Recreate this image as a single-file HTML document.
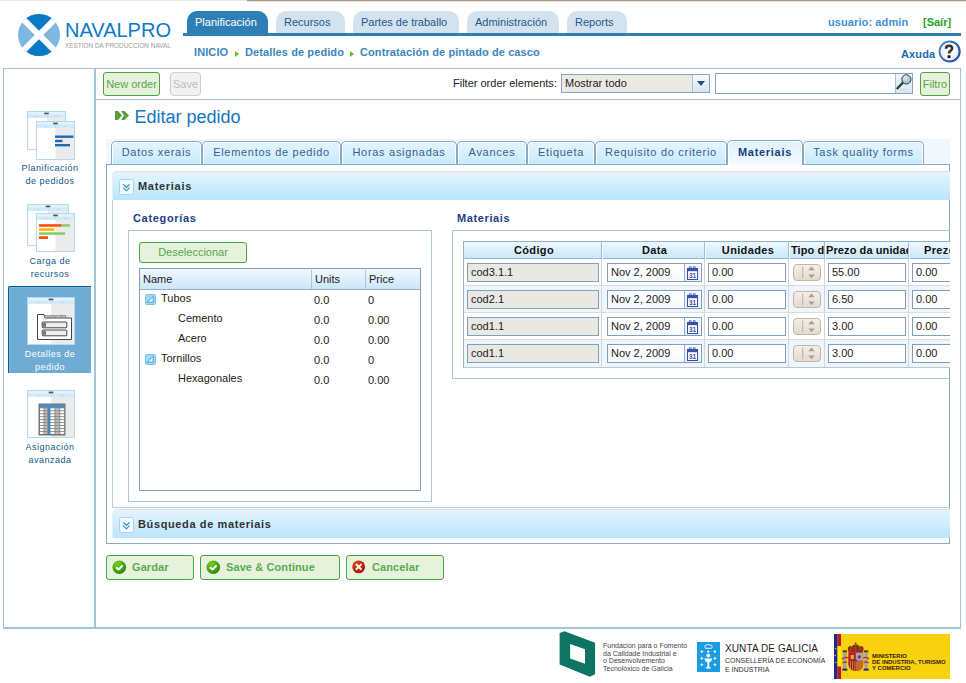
<!DOCTYPE html>
<html><head><meta charset="utf-8">
<style>
*{box-sizing:border-box;margin:0;padding:0}
html,body{width:966px;height:683px;overflow:hidden;background:#fff;font-variant-ligatures:none;font-family:"Liberation Sans",sans-serif;font-size:11px;color:#222}
.a{position:absolute}
#topline{left:247px;top:0;width:719px;height:1px;background:#a89b8a}
#topline0{left:0;top:0;width:247px;height:1px;background:#ebe7e1}
#topline2{left:247px;top:1px;width:719px;height:1px;background:#e6e0d8}
/* header tabs */
.htab{position:absolute;top:11px;height:22px;border-radius:10px 10px 0 0;background:#d3e2ef;color:#1d5a8a;font-size:11px;line-height:22px;padding-left:8px;white-space:nowrap}
.htab.sel{background:#2d7fb5;color:#fff}
#hline{left:183px;top:33px;width:778px;height:3px;background:#2d7fb5}
.crumb{position:absolute;top:45px;font-weight:bold;color:#3d85bd;font-size:11px;line-height:14px;white-space:nowrap;letter-spacing:0.1px}
.arr{position:absolute;width:0;height:0;border-left:4px solid #5cc414;border-top:3px solid transparent;border-bottom:3px solid transparent}
/* main box */
#box{left:3px;top:68px;width:958px;height:561px;border:1px solid #9ec6d9;border-bottom-width:2px}
#divider{left:94px;top:68px;width:2px;height:561px;background:#9ec6d9}
#tbline{left:96px;top:99px;width:864px;height:1px;background:#9ec6d9}
.gbtn{position:absolute;border:1px solid #4aa53e;border-radius:3px;background:#e6f2dc;color:#56a84a;font-size:11px;text-align:center;white-space:nowrap}
.side{position:absolute;left:8px;width:84px;text-align:center;color:#0f5788;font-size:9px;line-height:12.7px;letter-spacing:0.5px}

.stab{position:absolute;top:141px;height:23px;border:1px solid #88aac4;border-bottom:none;border-radius:5px 5px 0 0;background:linear-gradient(#e4f5fd,#c8ebfc);box-shadow:inset 1px 1px 0 #fff,inset -1px 0 0 #fff;color:#3a5f8e;font-size:11px;letter-spacing:0.7px;line-height:20px;text-align:center;white-space:nowrap}
.stab.sel{top:140px;height:25px;background:linear-gradient(#def2fc,#f4fbfe);font-weight:bold;color:#163e82;font-size:11px;letter-spacing:0.7px;line-height:22px}
.colicon{position:absolute;width:15px;height:16px;border:1px solid #b7cfe0;border-radius:3px;background:linear-gradient(#ffffff,#e6f1f8)}
.ticon{position:absolute;width:11px;height:11px;border:1px solid #6fb2e0;border-radius:2px;background:#a5d5f5}
.gbtn2{position:absolute;height:25px;border:1px solid #4aa53e;border-radius:3px;background:#e6f2dc;color:#5aab4e;font-weight:bold;font-size:11px;line-height:23px;padding-left:25px;white-space:nowrap;letter-spacing:0.1px}
.ok,.ko{position:absolute;left:5px;top:5px;width:14px;height:14px;border-radius:50%;background:radial-gradient(circle at 40% 30%,#8fd45a,#2f8a1c)}
.ko{background:radial-gradient(circle at 40% 30%,#f06a4a,#a51a10)}

.th{font-weight:bold;font-size:11px;line-height:13px;color:#111;white-space:nowrap;letter-spacing:0.35px}
.inp{height:19px;border:1px solid #7f9fc0;background:#fff;padding-left:3px;line-height:17px;font-size:11px;color:#222;white-space:nowrap;overflow:hidden}
.cal{width:16px;height:17px;border-left:1px solid #9fb8d0;background:#fff}
.spin{width:27px;height:17px;border:1px solid #cbc2b5;border-radius:4px;background:#e9e4dc}
</style></head><body>
<div id="topline0" class="a"></div><div id="topline" class="a"></div><div id="topline2" class="a"></div>

<!-- logo -->
<svg class="a" style="left:17px;top:13px" width="44" height="44" viewBox="0 0 44 44">
  <defs><clipPath id="cc"><circle cx="22" cy="22" r="21"/></clipPath></defs>
  <g clip-path="url(#cc)">
    <rect x="0" y="0" width="44" height="44" fill="#7db8e3"/>
    <polygon points="0,0 44,0 22,22" fill="#0a7ac7"/>
    <polygon points="0,44 44,44 22,22" fill="#0a7ac7"/>
    <line x1="0" y1="0" x2="44" y2="44" stroke="#fff" stroke-width="6"/>
    <line x1="44" y1="0" x2="0" y2="44" stroke="#fff" stroke-width="6"/>
  </g>
</svg>
<div class="a" style="left:65px;top:20px;font-size:20px;line-height:20px;color:#0a7ac7">NAVALPRO</div>
<div class="a" style="left:65px;top:42px;font-size:7px;line-height:8px;color:#9a9a9a;transform:scaleX(0.915);transform-origin:0 0;white-space:nowrap">XESTION DA PRODUCCION NAVAL</div>

<!-- header tabs -->
<div class="htab sel" style="left:187px;width:81px">Planificación</div>
<div class="htab" style="left:276px;width:69px">Recursos</div>
<div class="htab" style="left:353px;width:106px">Partes de traballo</div>
<div class="htab" style="left:467px;width:92px">Administración</div>
<div class="htab" style="left:567px;width:60px">Reports</div>
<div id="hline" class="a"></div>
<div class="a" style="left:828px;top:15px;font-weight:bold;color:#3b92d8;font-size:11px;line-height:14px;letter-spacing:0.1px">usuario: admin</div>
<div class="a" style="left:923px;top:15px;font-weight:bold;color:#1ea01e;font-size:11px;line-height:14px">[Saír]</div>

<div class="crumb" style="left:194px">INICIO</div>
<div class="arr" style="left:235px;top:51px"></div>
<div class="crumb" style="left:245px">Detalles de pedido</div>
<div class="arr" style="left:350px;top:51px"></div>
<div class="crumb" style="left:360px">Contratación de pintado de casco</div>

<div class="a" style="left:901px;top:47px;font-weight:bold;color:#1a68b0;font-size:11px;line-height:14px;letter-spacing:0.15px">Axuda</div>
<svg class="a" style="left:937px;top:39px" width="25" height="25" viewBox="0 0 25 25">
  <defs><linearGradient id="qg" x1="0" y1="0" x2="1" y2="1"><stop offset="0" stop-color="#4f86d6"/><stop offset="1" stop-color="#1d4a9e"/></linearGradient>
  <radialGradient id="qf" cx="0.5" cy="0.4" r="0.6"><stop offset="0" stop-color="#ffffff"/><stop offset="1" stop-color="#ececec"/></radialGradient></defs>
  <circle cx="12.7" cy="12.4" r="10.1" fill="url(#qf)" stroke="url(#qg)" stroke-width="1.8"/>
  <path d="M13.5,2.6 A9.9,9.9 0 0 1 13.5,22.2" fill="none" stroke="#2c5cb0" stroke-width="1.2" opacity="0.8"/>
  <path d="M9,9.7 Q9,6.7 12,6.7 Q15.1,6.7 15.1,9.3 Q15.1,11 13.2,12.1 Q12.1,12.8 12.1,14.4" fill="none" stroke="#333" stroke-width="2.6"/>
  <rect x="10.6" y="16.2" width="2.9" height="2.8" rx="0.6" fill="#111"/>
</svg>

<!-- main box -->
<div id="box" class="a"></div>
<div id="divider" class="a"></div>
<div id="tbline" class="a"></div>

<div class="gbtn" style="left:103px;top:72px;width:57px;height:24px;line-height:22px">New order</div>
<div class="a" style="left:170px;top:72px;width:31px;height:24px;line-height:22px;border:1px solid #cfcfcf;border-radius:4px;background:#f1f1f1;color:#bdbdbd;text-align:center">Save</div>
<div class="a" style="left:453px;top:76px;line-height:14px;color:#222">Filter order elements:</div>
<div class="a" style="left:561px;top:74px;width:149px;height:19px;border:1px solid #86a5c2;background:#ebe9e4"></div>
<div class="a" style="left:565px;top:76px;line-height:14px">Mostrar todo</div>
<div class="a" style="left:692px;top:75px;width:17px;height:17px;background:linear-gradient(#f6fafd,#d6e6f2);border-left:1px solid #a8c0d6"></div>
<div class="a" style="left:697px;top:81px;width:0;height:0;border-top:5px solid #234e7a;border-left:4px solid transparent;border-right:4px solid transparent"></div>
<div class="a" style="left:715px;top:73px;width:198px;height:21px;border:1px solid #86a5c2;background:#fff"></div>
<div class="a" style="left:895px;top:74px;width:17px;height:19px;background:linear-gradient(#f1f6fa,#d8e6f1);border-left:1px solid #a8c0d6"></div>
<svg class="a" style="left:890px;top:70px" width="28" height="28" viewBox="890 70 28 28">
  <defs><radialGradient id="lg" cx="0.4" cy="0.35" r="0.7"><stop offset="0" stop-color="#d6ecfb"/><stop offset="1" stop-color="#7fb6e0"/></radialGradient></defs>
  <path d="M899.5,89.6 H908" stroke="#c8d4dc" stroke-width="0.8"/>
  <line x1="897.4" y1="88.3" x2="902.6" y2="83" stroke="#2a2a2a" stroke-width="2.3" stroke-linecap="round"/>
  <line x1="898" y1="87.7" x2="902" y2="83.6" stroke="#5a9ad0" stroke-width="0.8" stroke-dasharray="0.9 0.9"/>
  <circle cx="906.4" cy="79.4" r="4.6" fill="url(#lg)" stroke="#3a3a3a" stroke-width="1"/>
  <path d="M903.6,78.2 Q904.6,76.2 906.8,76" stroke="#fff" stroke-width="0.8" fill="none"/>
</svg>
<div class="gbtn" style="left:920px;top:72px;width:30px;height:24px;line-height:22px">Filtro</div>

<!-- left side nav -->
<div class="side" style="top:162px">Planificación<br>de pedidos</div>
<div class="side" style="top:255px">Carga de<br>recursos</div>
<div class="a" style="left:8px;top:286px;width:83px;height:87px;background:#6facd4;border-top:1px solid #005f9b;border-left:1px solid #005f9b;border-radius:2px 0 0 0;box-shadow:inset 1px 1px 0 #7cb9de"></div>
<svg class="a" style="left:0;top:0" width="95" height="470" viewBox="0 0 95 470">
<rect x="27.5" y="111.5" width="38" height="38" fill="#fff" stroke="#b4daf2"/>
<rect x="47" y="117.5" width="18" height="31.5" fill="#ebebeb"/>
<rect x="28" y="112" width="37" height="3" fill="#e2f3fd"/>
<rect x="28" y="115" width="37" height="2.5" fill="#d3ecfb"/>
<rect x="28" y="114.8" width="37" height="0.5" fill="#bde0f6"/>
<rect x="28" y="117.3" width="37" height="0.5" fill="#bde0f6"/>
<rect x="44.2" y="112.6" width="4.6" height="1.7" fill="#555"/>
<rect x="46.7" y="115" width="0.6" height="2.5" fill="#a9d2ee"/>
<rect x="35.5" y="115.9" width="3" height="0.7" fill="#c8c8c8"/>
<rect x="55.0" y="115.9" width="3" height="0.7" fill="#c8c8c8"/>
<rect x="36.5" y="121.5" width="38" height="38" fill="#fff" stroke="#b4daf2"/>
<rect x="55.5" y="127.5" width="18.5" height="31.5" fill="#ebebeb"/>
<rect x="37" y="122" width="37" height="3" fill="#e2f3fd"/>
<rect x="37" y="125" width="37" height="2.5" fill="#d3ecfb"/>
<rect x="37" y="124.8" width="37" height="0.5" fill="#bde0f6"/>
<rect x="37" y="127.3" width="37" height="0.5" fill="#bde0f6"/>
<rect x="53.2" y="122.6" width="4.6" height="1.7" fill="#555"/>
<rect x="55.2" y="125" width="0.6" height="2.5" fill="#a9d2ee"/>
<rect x="44.25" y="125.9" width="3" height="0.7" fill="#c8c8c8"/>
<rect x="63.75" y="125.9" width="3" height="0.7" fill="#c8c8c8"/>
<rect x="55" y="135.5" width="18.5" height="2.4" fill="#1a6db2"/>
<rect x="55" y="139.8" width="7.5" height="2.4" fill="#1a6db2"/>
<rect x="55" y="144" width="15" height="2.4" fill="#1a6db2"/>
<rect x="27.5" y="204.5" width="41" height="41" fill="#fff" stroke="#b4daf2"/>
<rect x="48" y="210.5" width="20" height="34.5" fill="#ebebeb"/>
<rect x="28" y="205" width="40" height="3" fill="#e2f3fd"/>
<rect x="28" y="208" width="40" height="2.5" fill="#d3ecfb"/>
<rect x="28" y="207.8" width="40" height="0.5" fill="#bde0f6"/>
<rect x="28" y="210.3" width="40" height="0.5" fill="#bde0f6"/>
<rect x="45.7" y="205.6" width="4.6" height="1.7" fill="#555"/>
<rect x="47.7" y="208" width="0.6" height="2.5" fill="#a9d2ee"/>
<rect x="36.0" y="208.9" width="3" height="0.7" fill="#c8c8c8"/>
<rect x="57.0" y="208.9" width="3" height="0.7" fill="#c8c8c8"/>
<rect x="36.5" y="213.5" width="38" height="38" fill="#fff" stroke="#b4daf2"/>
<rect x="55.5" y="219.5" width="18.5" height="31.5" fill="#ebebeb"/>
<rect x="37" y="214" width="37" height="3" fill="#e2f3fd"/>
<rect x="37" y="217" width="37" height="2.5" fill="#d3ecfb"/>
<rect x="37" y="216.8" width="37" height="0.5" fill="#bde0f6"/>
<rect x="37" y="219.3" width="37" height="0.5" fill="#bde0f6"/>
<rect x="53.2" y="214.6" width="4.6" height="1.7" fill="#555"/>
<rect x="55.2" y="217" width="0.6" height="2.5" fill="#a9d2ee"/>
<rect x="44.25" y="217.9" width="3" height="0.7" fill="#c8c8c8"/>
<rect x="63.75" y="217.9" width="3" height="0.7" fill="#c8c8c8"/>
<rect x="39" y="224.2" width="22.7" height="2.5" fill="#ff4800"/>
<rect x="61.7" y="224.2" width="8.2" height="2.5" fill="#88cc66"/>
<rect x="39" y="228.3" width="15.3" height="2.5" fill="#ffb000"/>
<rect x="39" y="232.3" width="26" height="2.5" fill="#88cc66"/>
<rect x="39" y="236.3" width="9" height="2.6" fill="#ff4800"/>
<rect x="27.5" y="297.5" width="47" height="47" fill="#fff" stroke="#b4daf2"/>
<rect x="51.2" y="303.5" width="22.799999999999997" height="40.5" fill="#ebebeb"/>
<rect x="28" y="298" width="46" height="3" fill="#e2f3fd"/>
<rect x="28" y="301" width="46" height="2.5" fill="#d3ecfb"/>
<rect x="28" y="300.8" width="46" height="0.5" fill="#bde0f6"/>
<rect x="28" y="303.3" width="46" height="0.5" fill="#bde0f6"/>
<rect x="48.7" y="298.6" width="4.6" height="1.7" fill="#555"/>
<rect x="50.900000000000006" y="301" width="0.6" height="2.5" fill="#a9d2ee"/>
<rect x="37.6" y="301.9" width="3" height="0.7" fill="#c8c8c8"/>
<rect x="61.6" y="301.9" width="3" height="0.7" fill="#c8c8c8"/>
<path d="M37.5,339.5 V314.5 H44 L45,318 H71.5 V339.5 Z" fill="#fff" stroke="#333" stroke-width="0.9"/>
<rect x="44.6" y="315.2" width="4.6" height="2.6" fill="#bbb" stroke="#666" stroke-width="0.4"/>
<rect x="50.2" y="315.2" width="4.6" height="2.6" fill="#bbb" stroke="#666" stroke-width="0.4"/>
<rect x="55.8" y="315.2" width="4.6" height="2.6" fill="#bbb" stroke="#666" stroke-width="0.4"/>
<rect x="61.4" y="315.2" width="4.6" height="2.6" fill="#bbb" stroke="#666" stroke-width="0.4"/>
<rect x="42.2" y="322" width="24.6" height="5.8" rx="0.8" fill="#eee" stroke="#333" stroke-width="0.9"/>
<rect x="43" y="322.9" width="3" height="4" fill="#777"/>
<rect x="42.2" y="330" width="24.6" height="5.8" rx="0.8" fill="#eee" stroke="#333" stroke-width="0.9"/>
<rect x="43" y="330.9" width="3" height="4" fill="#777"/>
<rect x="27.5" y="390.5" width="47" height="47" fill="#fff" stroke="#b4daf2"/>
<rect x="51.2" y="396.5" width="22.799999999999997" height="40.5" fill="#ebebeb"/>
<rect x="28" y="391" width="46" height="3" fill="#e2f3fd"/>
<rect x="28" y="394" width="46" height="2.5" fill="#d3ecfb"/>
<rect x="28" y="393.8" width="46" height="0.5" fill="#bde0f6"/>
<rect x="28" y="396.3" width="46" height="0.5" fill="#bde0f6"/>
<rect x="48.7" y="391.6" width="4.6" height="1.7" fill="#555"/>
<rect x="50.900000000000006" y="394" width="0.6" height="2.5" fill="#a9d2ee"/>
<rect x="37.6" y="394.9" width="3" height="0.7" fill="#c8c8c8"/>
<rect x="61.6" y="394.9" width="3" height="0.7" fill="#c8c8c8"/>
<rect x="39" y="404" width="26" height="31" fill="#8a8a8a" stroke="#555" stroke-width="0.8"/>
<rect x="39.4" y="404.4" width="25.2" height="3.3" fill="#4d8cc4"/>
<rect x="40" y="408.3" width="3.5" height="2" fill="#fff"/>
<rect x="44.3" y="408.3" width="3" height="2" fill="#bbb"/>
<rect x="50.5" y="408.3" width="4" height="2" fill="#fff"/>
<rect x="55.5" y="408.3" width="3.8" height="2" fill="#bbb"/>
<rect x="60.2" y="408.3" width="4" height="2" fill="#fff"/>
<rect x="40" y="411.25" width="3.5" height="2" fill="#fff"/>
<rect x="44.3" y="411.25" width="3" height="2" fill="#bbb"/>
<rect x="50.5" y="411.25" width="4" height="2" fill="#fff"/>
<rect x="55.5" y="411.25" width="3.8" height="2" fill="#bbb"/>
<rect x="60.2" y="411.25" width="4" height="2" fill="#fff"/>
<rect x="40" y="414.2" width="3.5" height="2" fill="#fff"/>
<rect x="44.3" y="414.2" width="3" height="2" fill="#bbb"/>
<rect x="50.5" y="414.2" width="4" height="2" fill="#fff"/>
<rect x="55.5" y="414.2" width="3.8" height="2" fill="#bbb"/>
<rect x="60.2" y="414.2" width="4" height="2" fill="#fff"/>
<rect x="40" y="417.15000000000003" width="3.5" height="2" fill="#fff"/>
<rect x="44.3" y="417.15000000000003" width="3" height="2" fill="#bbb"/>
<rect x="50.5" y="417.15000000000003" width="4" height="2" fill="#fff"/>
<rect x="55.5" y="417.15000000000003" width="3.8" height="2" fill="#bbb"/>
<rect x="60.2" y="417.15000000000003" width="4" height="2" fill="#fff"/>
<rect x="40" y="420.1" width="3.5" height="2" fill="#fff"/>
<rect x="44.3" y="420.1" width="3" height="2" fill="#bbb"/>
<rect x="50.5" y="420.1" width="4" height="2" fill="#fff"/>
<rect x="55.5" y="420.1" width="3.8" height="2" fill="#bbb"/>
<rect x="60.2" y="420.1" width="4" height="2" fill="#fff"/>
<rect x="40" y="423.05" width="3.5" height="2" fill="#fff"/>
<rect x="44.3" y="423.05" width="3" height="2" fill="#bbb"/>
<rect x="50.5" y="423.05" width="4" height="2" fill="#fff"/>
<rect x="55.5" y="423.05" width="3.8" height="2" fill="#bbb"/>
<rect x="60.2" y="423.05" width="4" height="2" fill="#fff"/>
<rect x="40" y="426.0" width="3.5" height="2" fill="#fff"/>
<rect x="44.3" y="426.0" width="3" height="2" fill="#bbb"/>
<rect x="50.5" y="426.0" width="4" height="2" fill="#fff"/>
<rect x="55.5" y="426.0" width="3.8" height="2" fill="#bbb"/>
<rect x="60.2" y="426.0" width="4" height="2" fill="#fff"/>
<rect x="40" y="428.95" width="3.5" height="2" fill="#fff"/>
<rect x="44.3" y="428.95" width="3" height="2" fill="#bbb"/>
<rect x="50.5" y="428.95" width="4" height="2" fill="#fff"/>
<rect x="55.5" y="428.95" width="3.8" height="2" fill="#bbb"/>
<rect x="60.2" y="428.95" width="4" height="2" fill="#fff"/>
<rect x="40" y="431.90000000000003" width="3.5" height="2" fill="#fff"/>
<rect x="44.3" y="431.90000000000003" width="3" height="2" fill="#bbb"/>
<rect x="50.5" y="431.90000000000003" width="4" height="2" fill="#fff"/>
<rect x="55.5" y="431.90000000000003" width="3.8" height="2" fill="#bbb"/>
<rect x="60.2" y="431.90000000000003" width="4" height="2" fill="#fff"/>
<rect x="48" y="407.7" width="1.9" height="27" fill="#3d86c6"/>
</svg>

<div class="side" style="top:348px;color:#fff">Detalles de<br>pedido</div>
<div class="side" style="top:441px">Asignación<br>avanzada</div>

<!-- heading -->
<div class="a" style="left:134.5px;top:106px;font-size:18px;line-height:22px;color:#1474c0">Editar pedido</div>


<!-- heading icon -->
<svg class="a" style="left:115px;top:111px" width="14" height="9" viewBox="0 0 14 9">
  <polygon points="0,0 3,0 7,4.5 3,9 0,9 0,0" fill="#5a9e3c"/>
  <polygon points="6,0 9.5,0 14,4.5 9.5,9 6,9 9,4.5" fill="#5a9e3c"/>
</svg>

<!-- sub tabs -->
<div class="a" style="left:106px;top:139px;width:844px;height:25px;background:#f1f8fd"></div>
<div class="a" id="tabpanel" style="left:106px;top:164px;width:844px;height:380px;border:1px solid #88aac4;background:#fff"></div>
<div class="stab" style="left:111px;width:91px">Datos xerais</div>
<div class="stab" style="left:202px;width:139px">Elementos de pedido</div>
<div class="stab" style="left:341px;width:116px">Horas asignadas</div>
<div class="stab" style="left:457px;width:70px">Avances</div>
<div class="stab" style="left:527px;width:68px">Etiqueta</div>
<div class="stab" style="left:595px;width:132px">Requisito do criterio</div>
<div class="stab sel" style="left:727px;width:76px">Materiais</div>
<div class="stab" style="left:803px;width:121px">Task quality forms</div>

<!-- materiais section -->
<div class="a" id="matsec" style="left:112px;top:171px;width:838px;height:337px;border:1px solid #b3cfe0;border-right:none;border-radius:5px 0 0 0"></div>
<div class="a" style="left:112px;top:171px;width:838px;height:29px;border-top:1px solid #d2e7f4;border-left:1px solid #e2f1fa;border-radius:5px 0 0 0;background:linear-gradient(#e8f1f7 0px,#e8f1f7 2px,#dcf3fe 4px,#bae5fd 100%)"></div>
<svg class="a" style="left:119px;top:179px" width="15" height="16" viewBox="0 0 15 16"><rect x="0.5" y="0.5" width="14" height="15" rx="2" fill="#f5f9fd" stroke="#a9d3ec"/><path d="M4.2,5.3 L7.4,8.5 L10.6,5.3 M4.2,8.6 L7.4,11.8 L10.6,8.6" fill="none" stroke="#1b8fc2" stroke-width="1.1"/></svg>
<div class="a" style="left:138px;top:179px;font-weight:bold;font-size:11px;letter-spacing:0.7px;line-height:14px;color:#333">Materiais</div>

<div class="a" style="left:133px;top:211px;font-weight:bold;font-size:11px;letter-spacing:0.68px;line-height:14px;color:#1d3f86">Categorías</div>
<div class="a" style="left:128px;top:230px;width:304px;height:272px;border:1px solid #a9c9dc"></div>
<div class="gbtn" style="left:139px;top:242px;width:108px;height:21px;line-height:19px">Deseleccionar</div>

<div class="a" style="left:139px;top:268px;width:282px;height:223px;border:1px solid #7f9fc0;background:#fff"></div>
<div class="a" style="left:140px;top:269px;width:280px;height:21px;background:linear-gradient(#f1f8fd,#cce6f8);border-bottom:1px solid #8fb0cf"></div>
<div class="a" style="left:311px;top:270px;width:1px;height:19px;background:#a9c6df"></div>
<div class="a" style="left:365px;top:270px;width:1px;height:19px;background:#a9c6df"></div>
<div class="a" style="left:143px;top:272px;line-height:14px">Name</div>
<div class="a" style="left:315px;top:272px;line-height:14px">Units</div>
<div class="a" style="left:369px;top:272px;line-height:14px">Price</div>

<svg class="a" style="left:145px;top:294px" width="11" height="11" viewBox="0 0 11 11"><rect x="0.5" y="0.5" width="10" height="10" rx="1" fill="#95def6" stroke="#86bfd6"/><path d="M2.3,8.2 L8.2,2.3 V8.2 Z" fill="#fff" stroke="#2c8be6" stroke-width="0.9" stroke-linejoin="round"/></svg>
<div class="a" style="left:161px;top:291px;line-height:14px">Tubos</div>
<div class="a" style="left:178px;top:311px;line-height:14px">Cemento</div>
<div class="a" style="left:178px;top:331px;line-height:14px">Acero</div>
<svg class="a" style="left:145px;top:354px" width="11" height="11" viewBox="0 0 11 11"><rect x="0.5" y="0.5" width="10" height="10" rx="1" fill="#95def6" stroke="#86bfd6"/><path d="M2.3,8.2 L8.2,2.3 V8.2 Z" fill="#fff" stroke="#2c8be6" stroke-width="0.9" stroke-linejoin="round"/></svg>
<div class="a" style="left:161px;top:351px;line-height:14px">Tornillos</div>
<div class="a" style="left:178px;top:371px;line-height:14px">Hexagonales</div>
<div class="a" style="left:314px;top:290px;line-height:20px">0.0<br>0.0<br>0.0<br>0.0<br>0.0</div>
<div class="a" style="left:368px;top:290px;line-height:20px">0<br>0.00<br>0.00<br>0<br>0.00</div>

<!-- materiais table -->
<div class="a" style="left:457px;top:211px;font-weight:bold;font-size:11px;letter-spacing:0.62px;line-height:14px;color:#1d3f86">Materiais</div>
<div class="a" style="left:452px;top:230px;width:498px;height:149px;border:1px solid #a9c9dc;border-right:none"></div>
<div class="a" id="mtab" style="left:463px;top:241px;width:487px;height:127px;overflow:hidden">
<div class="a" style="left:0;top:0;width:540px;height:127px;border:1px solid #94b3cf;border-bottom-color:#b9c7d3;background:#fff"></div>
<div class="a" style="left:1px;top:1px;width:540px;height:17px;background:linear-gradient(#eef8fe,#c9e7f9);border-bottom:1px solid #98b7d4"></div>
<div class="a" style="left:1px;top:45px;width:540px;height:27px;background:#eef6fc"></div>
<div class="a" style="left:1px;top:44px;width:540px;height:1px;background:#dcdcdc"></div>
<div class="a" style="left:1px;top:71px;width:540px;height:1px;background:#dcdcdc"></div>
<div class="a" style="left:1px;top:99px;width:540px;height:27px;background:#eef6fc"></div>
<div class="a" style="left:1px;top:98px;width:540px;height:1px;background:#dcdcdc"></div>
<div class="a" style="left:138px;top:1px;width:1px;height:17px;background:#9fbcd8"></div>
<div class="a" style="left:139px;top:1px;width:1px;height:17px;background:#f4fbff"></div>
<div class="a" style="left:138px;top:18px;width:1px;height:108px;background:#d6d6d6"></div>
<div class="a" style="left:241px;top:1px;width:1px;height:17px;background:#9fbcd8"></div>
<div class="a" style="left:242px;top:1px;width:1px;height:17px;background:#f4fbff"></div>
<div class="a" style="left:241px;top:18px;width:1px;height:108px;background:#d6d6d6"></div>
<div class="a" style="left:325px;top:1px;width:1px;height:17px;background:#9fbcd8"></div>
<div class="a" style="left:326px;top:1px;width:1px;height:17px;background:#f4fbff"></div>
<div class="a" style="left:325px;top:18px;width:1px;height:108px;background:#d6d6d6"></div>
<div class="a" style="left:361px;top:1px;width:1px;height:17px;background:#9fbcd8"></div>
<div class="a" style="left:362px;top:1px;width:1px;height:17px;background:#f4fbff"></div>
<div class="a" style="left:361px;top:18px;width:1px;height:108px;background:#d6d6d6"></div>
<div class="a" style="left:445px;top:1px;width:1px;height:17px;background:#9fbcd8"></div>
<div class="a" style="left:446px;top:1px;width:1px;height:17px;background:#f4fbff"></div>
<div class="a" style="left:445px;top:18px;width:1px;height:108px;background:#d6d6d6"></div>
<div class="a th" style="left:2px;top:3px;width:138px;text-align:center">Código</div>
<div class="a th" style="left:140px;top:3px;width:103px;text-align:center">Data</div>
<div class="a th" style="left:243px;top:3px;width:84px;text-align:center">Unidades</div>
<div class="a th" style="left:328px;top:3px;width:33px;overflow:hidden;letter-spacing:0.1px">Tipo de</div>
<div class="a th" style="left:363px;top:3px;width:82px;overflow:hidden;letter-spacing:0.1px">Prezo da unidade</div>
<div class="a th" style="left:461px;top:3px">Prezo</div>
<div class="a inp" style="left:4px;top:22px;width:132px;background:#eae8e3">cod3.1.1</div>
<div class="a inp" style="left:144px;top:22px;width:95px;background:linear-gradient(#fff,#f6fafd)">Nov 2, 2009</div>
<div class="a" style="left:221px;top:23px;width:16px;height:17px;background:linear-gradient(#f7fbfe,#e2eff9)"></div><div class="a" style="left:221px;top:23px;width:1px;height:17px;background:#93b0cc"></div>
<div class="a" style="left:224px;top:25px;width:12px;height:15px"><svg width="12" height="15" viewBox="0 0 12 15"><g fill="none" stroke="#3a4fa8" stroke-width="0.8"><circle cx="3.3" cy="1.3" r="1"/><circle cx="7.3" cy="1.3" r="1"/></g><rect x="0.5" y="2.5" width="10" height="11" fill="#fff" stroke="#3a4fa8"/><rect x="0.5" y="2.5" width="10" height="2.7" fill="#3a4fa8"/><text x="5.5" y="11.8" text-anchor="middle" font-family="Liberation Sans" font-weight="bold" font-size="6.5" fill="#3a4fa8">31</text></svg></div>
<div class="a inp" style="left:245px;top:22px;width:78px">0.00</div>
<div class="a" style="left:330px;top:23px;width:28px;height:17px"><svg width="28" height="17" viewBox="0 0 28 17"><defs><linearGradient id="sg" x1="0" y1="0" x2="0" y2="1"><stop offset="0" stop-color="#f3efea"/><stop offset="1" stop-color="#e2dacf"/></linearGradient></defs><rect x="0.5" y="0.5" width="27" height="16" rx="3.5" fill="url(#sg)" stroke="#c2b5a4"/><rect x="9.3" y="2.5" width="0.9" height="11.5" fill="#b5a896"/><path d="M15.3,6.3 L18.5,2.4 L21.7,6.3 Z M15.3,10.4 L18.5,14.3 L21.7,10.4 Z" fill="#ab9d8a"/></svg></div>
<div class="a inp" style="left:365px;top:22px;width:78px">55.00</div>
<div class="a inp" style="left:449px;top:22px;width:78px">0.00</div>
<div class="a inp" style="left:4px;top:49px;width:132px;background:#eae8e3">cod2.1</div>
<div class="a inp" style="left:144px;top:49px;width:95px;background:linear-gradient(#fff,#f6fafd)">Nov 2, 2009</div>
<div class="a" style="left:221px;top:50px;width:16px;height:17px;background:linear-gradient(#f7fbfe,#e2eff9)"></div><div class="a" style="left:221px;top:50px;width:1px;height:17px;background:#93b0cc"></div>
<div class="a" style="left:224px;top:52px;width:12px;height:15px"><svg width="12" height="15" viewBox="0 0 12 15"><g fill="none" stroke="#3a4fa8" stroke-width="0.8"><circle cx="3.3" cy="1.3" r="1"/><circle cx="7.3" cy="1.3" r="1"/></g><rect x="0.5" y="2.5" width="10" height="11" fill="#fff" stroke="#3a4fa8"/><rect x="0.5" y="2.5" width="10" height="2.7" fill="#3a4fa8"/><text x="5.5" y="11.8" text-anchor="middle" font-family="Liberation Sans" font-weight="bold" font-size="6.5" fill="#3a4fa8">31</text></svg></div>
<div class="a inp" style="left:245px;top:49px;width:78px">0.00</div>
<div class="a" style="left:330px;top:50px;width:28px;height:17px"><svg width="28" height="17" viewBox="0 0 28 17"><defs><linearGradient id="sg" x1="0" y1="0" x2="0" y2="1"><stop offset="0" stop-color="#f3efea"/><stop offset="1" stop-color="#e2dacf"/></linearGradient></defs><rect x="0.5" y="0.5" width="27" height="16" rx="3.5" fill="url(#sg)" stroke="#c2b5a4"/><rect x="9.3" y="2.5" width="0.9" height="11.5" fill="#b5a896"/><path d="M15.3,6.3 L18.5,2.4 L21.7,6.3 Z M15.3,10.4 L18.5,14.3 L21.7,10.4 Z" fill="#ab9d8a"/></svg></div>
<div class="a inp" style="left:365px;top:49px;width:78px">6.50</div>
<div class="a inp" style="left:449px;top:49px;width:78px">0.00</div>
<div class="a inp" style="left:4px;top:76px;width:132px;background:#eae8e3">cod1.1</div>
<div class="a inp" style="left:144px;top:76px;width:95px;background:linear-gradient(#fff,#f6fafd)">Nov 2, 2009</div>
<div class="a" style="left:221px;top:77px;width:16px;height:17px;background:linear-gradient(#f7fbfe,#e2eff9)"></div><div class="a" style="left:221px;top:77px;width:1px;height:17px;background:#93b0cc"></div>
<div class="a" style="left:224px;top:79px;width:12px;height:15px"><svg width="12" height="15" viewBox="0 0 12 15"><g fill="none" stroke="#3a4fa8" stroke-width="0.8"><circle cx="3.3" cy="1.3" r="1"/><circle cx="7.3" cy="1.3" r="1"/></g><rect x="0.5" y="2.5" width="10" height="11" fill="#fff" stroke="#3a4fa8"/><rect x="0.5" y="2.5" width="10" height="2.7" fill="#3a4fa8"/><text x="5.5" y="11.8" text-anchor="middle" font-family="Liberation Sans" font-weight="bold" font-size="6.5" fill="#3a4fa8">31</text></svg></div>
<div class="a inp" style="left:245px;top:76px;width:78px">0.00</div>
<div class="a" style="left:330px;top:77px;width:28px;height:17px"><svg width="28" height="17" viewBox="0 0 28 17"><defs><linearGradient id="sg" x1="0" y1="0" x2="0" y2="1"><stop offset="0" stop-color="#f3efea"/><stop offset="1" stop-color="#e2dacf"/></linearGradient></defs><rect x="0.5" y="0.5" width="27" height="16" rx="3.5" fill="url(#sg)" stroke="#c2b5a4"/><rect x="9.3" y="2.5" width="0.9" height="11.5" fill="#b5a896"/><path d="M15.3,6.3 L18.5,2.4 L21.7,6.3 Z M15.3,10.4 L18.5,14.3 L21.7,10.4 Z" fill="#ab9d8a"/></svg></div>
<div class="a inp" style="left:365px;top:76px;width:78px">3.00</div>
<div class="a inp" style="left:449px;top:76px;width:78px">0.00</div>
<div class="a inp" style="left:4px;top:103px;width:132px;background:#eae8e3">cod1.1</div>
<div class="a inp" style="left:144px;top:103px;width:95px;background:linear-gradient(#fff,#f6fafd)">Nov 2, 2009</div>
<div class="a" style="left:221px;top:104px;width:16px;height:17px;background:linear-gradient(#f7fbfe,#e2eff9)"></div><div class="a" style="left:221px;top:104px;width:1px;height:17px;background:#93b0cc"></div>
<div class="a" style="left:224px;top:106px;width:12px;height:15px"><svg width="12" height="15" viewBox="0 0 12 15"><g fill="none" stroke="#3a4fa8" stroke-width="0.8"><circle cx="3.3" cy="1.3" r="1"/><circle cx="7.3" cy="1.3" r="1"/></g><rect x="0.5" y="2.5" width="10" height="11" fill="#fff" stroke="#3a4fa8"/><rect x="0.5" y="2.5" width="10" height="2.7" fill="#3a4fa8"/><text x="5.5" y="11.8" text-anchor="middle" font-family="Liberation Sans" font-weight="bold" font-size="6.5" fill="#3a4fa8">31</text></svg></div>
<div class="a inp" style="left:245px;top:103px;width:78px">0.00</div>
<div class="a" style="left:330px;top:104px;width:28px;height:17px"><svg width="28" height="17" viewBox="0 0 28 17"><defs><linearGradient id="sg" x1="0" y1="0" x2="0" y2="1"><stop offset="0" stop-color="#f3efea"/><stop offset="1" stop-color="#e2dacf"/></linearGradient></defs><rect x="0.5" y="0.5" width="27" height="16" rx="3.5" fill="url(#sg)" stroke="#c2b5a4"/><rect x="9.3" y="2.5" width="0.9" height="11.5" fill="#b5a896"/><path d="M15.3,6.3 L18.5,2.4 L21.7,6.3 Z M15.3,10.4 L18.5,14.3 L21.7,10.4 Z" fill="#ab9d8a"/></svg></div>
<div class="a inp" style="left:365px;top:103px;width:78px">3.00</div>
<div class="a inp" style="left:449px;top:103px;width:78px">0.00</div>
</div>

<!-- busqueda -->
<div class="a" style="left:112px;top:509px;width:838px;height:29px;border-top:1px solid #d2e7f4;border-left:1px solid #e2f1fa;border-radius:5px 0 0 0;background:linear-gradient(#e8f1f7 0px,#e8f1f7 2px,#dcf3fe 4px,#bae5fd 100%)"></div>
<svg class="a" style="left:119px;top:517px" width="15" height="16" viewBox="0 0 15 16"><rect x="0.5" y="0.5" width="14" height="15" rx="2" fill="#f5f9fd" stroke="#a9d3ec"/><path d="M4.2,5.3 L7.4,8.5 L10.6,5.3 M4.2,8.6 L7.4,11.8 L10.6,8.6" fill="none" stroke="#1b8fc2" stroke-width="1.1"/></svg>
<div class="a" style="left:138px;top:517px;font-weight:bold;font-size:11px;letter-spacing:0.62px;line-height:14px;color:#333">Búsqueda de materiais</div>

<!-- bottom buttons -->
<div class="gbtn2" style="left:106px;top:555px;width:88px"><svg class="a" style="left:4.5px;top:3.6px" width="15" height="15" viewBox="0 0 15 15"><defs><radialGradient id="gk" cx="0.35" cy="0.25" r="0.8"><stop offset="0" stop-color="#7ccf1c"/><stop offset="1" stop-color="#27850f"/></radialGradient></defs><circle cx="7.3" cy="7.3" r="6.8" fill="url(#gk)"/><path d="M4.6,7.8 L6.5,9.6 L10,6" fill="none" stroke="#fff" stroke-width="1.9" stroke-linecap="round" stroke-linejoin="round"/></svg>Gardar</div>
<div class="gbtn2" style="left:200px;top:555px;width:140px"><svg class="a" style="left:4.5px;top:3.6px" width="15" height="15" viewBox="0 0 15 15"><defs><radialGradient id="gk" cx="0.35" cy="0.25" r="0.8"><stop offset="0" stop-color="#7ccf1c"/><stop offset="1" stop-color="#27850f"/></radialGradient></defs><circle cx="7.3" cy="7.3" r="6.8" fill="url(#gk)"/><path d="M4.6,7.8 L6.5,9.6 L10,6" fill="none" stroke="#fff" stroke-width="1.9" stroke-linecap="round" stroke-linejoin="round"/></svg>Save &amp; Continue</div>
<div class="gbtn2" style="left:346px;top:555px;width:98px"><svg class="a" style="left:5px;top:4px" width="15" height="15" viewBox="0 0 15 15"><defs><radialGradient id="gr" cx="0.35" cy="0.3" r="0.8"><stop offset="0" stop-color="#e2461a"/><stop offset="1" stop-color="#9c1408"/></radialGradient></defs><circle cx="6.7" cy="6.9" r="6.4" fill="url(#gr)"/><path d="M4.4,4.6 L9,9.2 M9,4.6 L4.4,9.2" fill="none" stroke="#fff" stroke-width="1.9" stroke-linecap="round"/></svg>Cancelar</div>

<!-- footer -->
<svg class="a" style="left:555px;top:628px" width="45" height="52" viewBox="555 628 45 52">
  <path fill-rule="evenodd" fill="#0d7561" d="M559.6,633 L564.5,631.3 L595.1,642.8 L595.1,674.3 L589.8,676.7 L559.6,664.6 Z M570.1,644.1 L585,649.3 L585,663.8 L570.1,658.6 Z"/>
</svg>
<div class="a" style="left:603px;top:642px;font-size:7px;line-height:7.5px;color:#444;white-space:nowrap">Fundación para o Fomento<br>da Calidade Industrial e<br>o Desenvolvemento<br>Tecnolóxico de Galicia</div>
<div class="a" style="left:697px;top:642px;width:23px;height:30px;background:#1b9be0"></div>
<svg class="a" style="left:697px;top:642px" width="23" height="30" viewBox="0 0 23 30">
  <g fill="#fff">
    <path d="M4.8,7.8 L5.3999999999999995,9.0 L6.6,9.6 L5.3999999999999995,10.2 L4.8,11.4 L4.2,10.2 L3.0,9.6 L4.2,9.0 Z M11.2,7.8 L11.799999999999999,9.0 L13.0,9.6 L11.799999999999999,10.2 L11.2,11.4 L10.6,10.2 L9.399999999999999,9.6 L10.6,9.0 Z M17.9,7.8 L18.5,9.0 L19.7,9.6 L18.5,10.2 L17.9,11.4 L17.299999999999997,10.2 L16.099999999999998,9.6 L17.299999999999997,9.0 Z M4.8,14.5 L5.3999999999999995,15.700000000000001 L6.6,16.3 L5.3999999999999995,16.900000000000002 L4.8,18.1 L4.2,16.900000000000002 L3.0,16.3 L4.2,15.700000000000001 Z M17.9,14.5 L18.5,15.700000000000001 L19.7,16.3 L18.5,16.900000000000002 L17.9,18.1 L17.299999999999997,16.900000000000002 L16.099999999999998,16.3 L17.299999999999997,15.700000000000001 Z M4.8,20.9 L5.3999999999999995,22.099999999999998 L6.6,22.7 L5.3999999999999995,23.3 L4.8,24.5 L4.2,23.3 L3.0,22.7 L4.2,22.099999999999998 Z M17.9,20.9 L18.5,22.099999999999998 L19.7,22.7 L18.5,23.3 L17.9,24.5 L17.299999999999997,23.3 L16.099999999999998,22.7 L17.299999999999997,22.099999999999998 Z"/>
    <path d="M7.8,4.5 Q8,2.6 9.5,3.2 Q11.2,1.2 13,3.2 Q14.8,2.6 15.2,4.5 L14.6,6.3 H8.4 Z" fill="none" stroke="#fff" stroke-width="0.9"/>
    <circle cx="11.3" cy="13.6" r="1.9"/>
    <path d="M7.3,16.6 H15.3 Q15,19.5 12.2,20.6 V24.6 Q13.8,25.6 14,26.6 H8.6 Q8.8,25.6 10.4,24.6 V20.6 Q7.6,19.5 7.3,16.6 Z"/>
  </g>
</svg>
<div class="a" style="left:725px;top:644px;font-size:10px;line-height:10px;color:#222;white-space:nowrap;letter-spacing:0.1px">XUNTA DE GALICIA</div>
<div class="a" style="left:725px;top:657px;font-size:7px;line-height:8.8px;color:#333;white-space:nowrap">CONSELLERÍA DE ECONOMÍA<br>E INDUSTRIA</div>

<div class="a" style="left:834px;top:634px;width:116px;height:45px;background:#f8d20f"></div>
<svg class="a" style="left:832px;top:632px" width="40" height="49" viewBox="832 632 40 49">
  <rect x="834" y="634" width="3.5" height="45" fill="#1c2a94"/>
  <rect x="837.5" y="634" width="3.5" height="45" fill="#c0182c"/>
  <rect x="837.5" y="646" width="3.5" height="20.5" fill="#fff000"/>
  <g fill="#f0c020"><circle cx="835.8" cy="648.5" r="0.8"/><circle cx="835.2" cy="655.5" r="0.8"/><circle cx="835.8" cy="662.5" r="0.8"/></g>
  <path d="M848.5,652.5 L847.8,648 Q849,645 852,646.5 Q853.5,643.8 855.7,644.6 Q858,643.8 859.5,646.5 Q862.5,645 863.6,648 L863,652.5 Z" fill="#7a3818"/><path d="M850,651 Q850.5,647 852.5,647.5 M855.7,651 V645.5 M861.4,651 Q861,647 859,647.5" stroke="#d03a28" stroke-width="1" fill="none"/>
  <path d="M848.6,650.8 H863 V652.8 H848.6 Z" fill="#b02a20"/>
  <circle cx="855.7" cy="643.3" r="0.9" fill="#6a3a10"/>
  <path d="M848.5,652.8 H863.2 V664.5 Q863,670.5 855.8,671 Q848.7,670.5 848.5,664.5 Z" fill="#a83030"/>
  <rect x="848.6" y="652.8" width="7.2" height="8" fill="#c01c24"/>
  <rect x="850.8" y="655" width="3" height="4" fill="#e0b030"/>
  <rect x="855.8" y="652.8" width="7.4" height="8" fill="#a8a4b0"/>
  <circle cx="859.3" cy="657" r="1.8" fill="#803a70"/>
  <path d="M848.6,660.8 H855.8 V670.8 Q849,670 848.6,664.5 Z" fill="#a02028"/>
  <g fill="#d8a030"><rect x="850" y="661" width="0.7" height="8"/><rect x="852.3" y="661" width="0.7" height="9"/><rect x="854.5" y="661" width="0.7" height="9.5"/></g>
  <path d="M855.8,660.8 H863.2 V664.5 Q863,670.5 855.8,671 Z" fill="#c86828"/>
  <circle cx="855.8" cy="660.5" r="1.2" fill="#3040a0"/>
  <rect x="843.2" y="651" width="3.2" height="19" fill="#a0a0a8"/>
  <rect x="864.5" y="651" width="3.2" height="19" fill="#a0a0a8"/>
  <rect x="842.6" y="650.3" width="4.4" height="2" fill="#6a3a10"/>
  <rect x="863.9" y="650.3" width="4.4" height="2" fill="#6a3a10"/>
  <rect x="842.3" y="668.6" width="5" height="2" fill="#2a2a60"/>
  <rect x="863.6" y="668.6" width="5" height="2" fill="#2a2a60"/>
  <path d="M842,659 Q845,656.5 848.6,658 M863.2,658 Q866.5,656.5 869,659 M842.5,663 Q845,661 847,662.5 M864,662.5 Q866,661 868.5,663" stroke="#c8202a" stroke-width="1.3" fill="none"/>
</svg>
<div class="a" style="left:872px;top:652.5px;font-size:6px;line-height:6.2px;color:#3a2008;font-weight:bold;white-space:nowrap">MINISTERIO<br>DE INDUSTRIA, TURISMO<br>Y COMERCIO</div>
</body></html>
